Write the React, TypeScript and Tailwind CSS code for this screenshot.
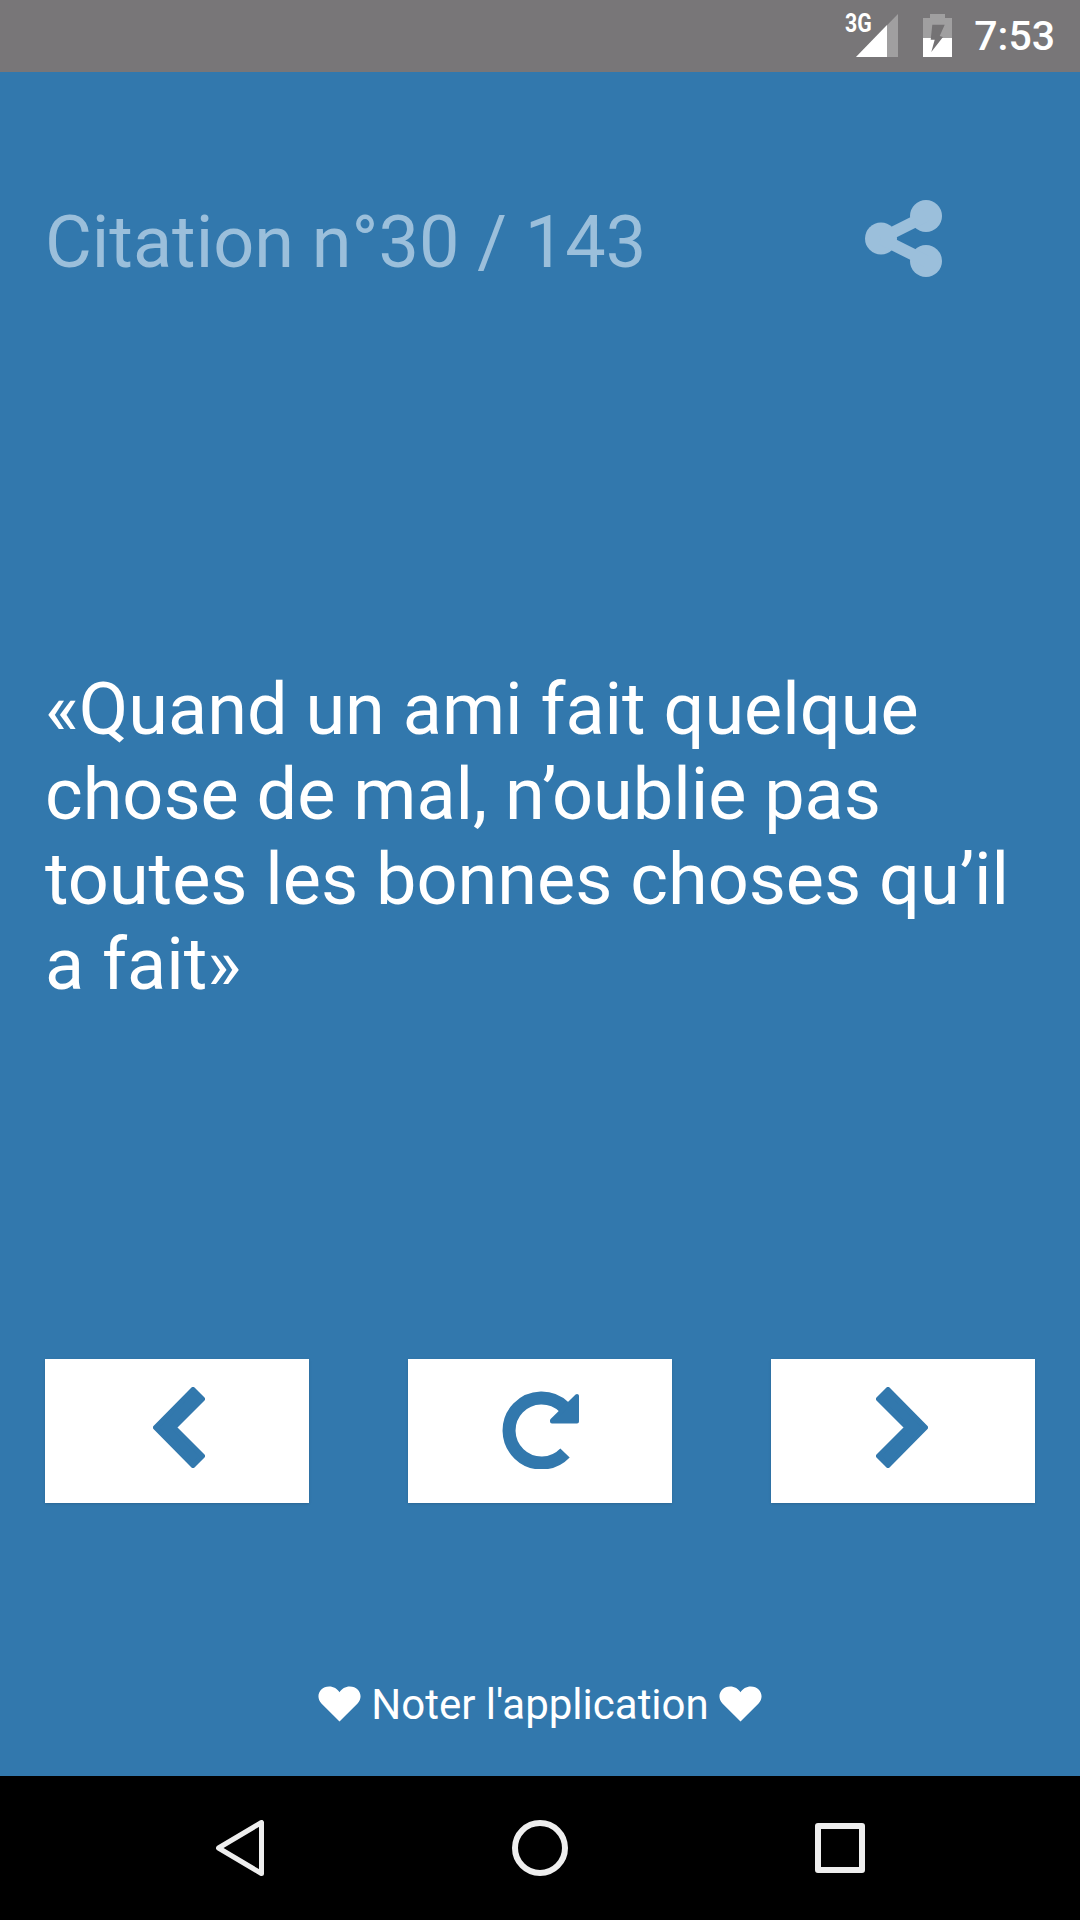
import React from "react";

const Heart = () => (
  <svg width="43" height="36" viewBox="0 0 44 36" className="fill-white shrink-0">
    <path d="M22 36 L3.5 17.5 C-3 10.5 1.5 0 11.5 0 C16 0 19.8 2.4 22 6 C24.2 2.4 28 0 32.5 0 C42.5 0 47 10.5 40.5 17.5 Z" />
  </svg>
);

const Chevron = ({ flip, className }: { flip?: boolean; className: string }) => (
  <svg
    width="52"
    height="81"
    viewBox="0 0 52 81"
    className={(flip ? "-scale-x-100 " : "") + className}
  >
    <path
      d="M2.5 40.5 L40 2.5 L49.5 12 L21 40.5 L49.5 69 L40 78.5 Z"
      className="fill-[#3278ad] stroke-[#3278ad]"
      strokeWidth="5"
      strokeLinejoin="round"
    />
  </svg>
);

const Reload = () => (
  <svg width="78" height="78" viewBox="0 0 78 78" className="ml-[2px] mt-[-2px]">
    <path d="M63 62 A32.5 32.5 0 1 1 62 16" fill="none" stroke="#3278ad" strokeWidth="13" />
    <path d="M50 29.5 L75 5 L75 30.5 L50 30.5 Z" fill="#3278ad" stroke="#3278ad" strokeWidth="4" strokeLinejoin="round" />
  </svg>
);

const Share = () => (
  <svg width="77" height="77" viewBox="0 0 77 77" className="fill-[#9bbfdb] stroke-[#9bbfdb]">
    <circle cx="16" cy="38.5" r="16" stroke="none" />
    <circle cx="61" cy="16" r="16" stroke="none" />
    <circle cx="61" cy="61" r="16" stroke="none" />
    <path d="M16 38.5 L61 16 M16 38.5 L61 61" strokeWidth="12" />
  </svg>
);

const StatusBar = () => (
  <div className="h-[72px] bg-[#787678] flex items-center justify-end shrink-0 relative">
    <span className="absolute left-[845px] top-[11px] origin-left scale-x-[0.85] text-[25px] leading-[26px] font-bold text-white font-['Roboto',sans-serif]">
      3G
    </span>
    <svg width="42" height="43" viewBox="0 0 42 43" className="mr-[25px] mt-[-1px]">
      <path d="M42 0 V43 H0 Z" fill="#fff" fillOpacity="0.3" />
      <path d="M31 11 V43 H0 Z" fill="#fff" />
    </svg>
    <svg width="29" height="43" viewBox="0 0 29 43" className="mr-[22px] mt-[-1px]">
      <path d="M7 0 H22 V4 H29 V43 H0 V4 H7 Z" fill="#fff" fillOpacity="0.3" />
      <path d="M0 24 H29 V43 H0 Z" fill="#fff" />
      <path d="M9.3 10.7 H21.7 L16.7 22 L20 23 L8.3 38 L11.7 25.7 H7.7 Z" fill="#747274" />
    </svg>
    <span className="text-[41px] leading-none font-medium text-white font-['Roboto',sans-serif] mr-[25px]">7:53</span>
  </div>
);

const NavBar = () => (
  <div className="h-[144px] bg-black flex items-center justify-between pl-[216px] pr-[215px] shrink-0">
    <svg width="48" height="56" viewBox="0 0 48 56">
      <path d="M45.5 2.5 V53.5 L2.5 28 Z" fill="none" stroke="#eeeeee" strokeWidth="5" strokeLinejoin="round" />
    </svg>
    <div className="w-14 h-14 rounded-full border-[6px] border-[#eeeeee]" />
    <div className="w-[50px] h-[50px] rounded-[3px] border-[6px] border-[#eeeeee]" />
  </div>
);

export default function App() {
  const btn = "w-[264px] h-[144px] bg-white flex items-center justify-center shadow-sm";
  return (
    <div className="w-[1080px] h-[1920px] flex flex-col bg-[#3278ad] font-['Roboto',sans-serif] overflow-hidden">
      <StatusBar />
      <main className="flex-1 flex flex-col">
        <div className="mt-[128px] h-[77px] flex items-center justify-between pl-[45px] pr-[138px]">
          <h1 className="mt-[8px] text-[72px] leading-none font-normal text-[#9bbfdb]">Citation n°30 / 143</h1>
          <Share />
        </div>
        <p className="mt-[390px] px-[45px] text-[72px] leading-[85px] text-white">
          «Quand un ami fait quelque chose de mal, n’oublie pas toutes les bonnes choses qu’il a fait»
        </p>
        <div className="mt-auto flex justify-between px-[45px]">
          <button className={btn}>
            <Chevron className="ml-[4px] mt-[-7px]" />
          </button>
          <button className={btn}>
            <Reload />
          </button>
          <button className={btn}>
            <Chevron flip className="ml-[-3px] mt-[-7px]" />
          </button>
        </div>
        <div className="mt-[183px] mb-[54px] h-[36px] flex items-center justify-center gap-[10px]">
          <Heart />
          <span className="mt-[2px] text-[42px] leading-none text-white">Noter l'application</span>
          <Heart />
        </div>
      </main>
      <NavBar />
    </div>
  );
}
